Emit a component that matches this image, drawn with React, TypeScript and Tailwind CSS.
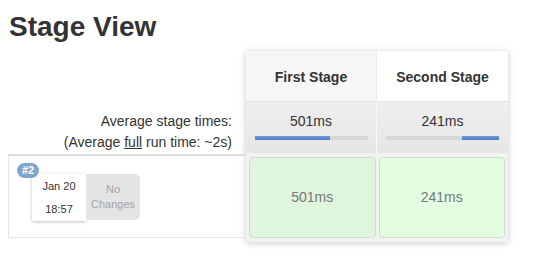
const stages = [
  { name: "First Stage", avg: "501ms", fill: 67, align: "left", took: "501ms", head: "bg-[#f6f6f6]", cell: "bg-[#def6db]" },
  { name: "Second Stage", avg: "241ms", fill: 33, align: "right", took: "241ms", head: "bg-white", cell: "bg-[#e3fde1]" },
];

export default function App() {
  return (
    <div className="min-h-screen bg-white px-[8px] text-[#333] font-['Liberation_Sans',Arial,sans-serif]">
      <h1 className="pt-[11px] pl-[1px] text-[28px] font-bold leading-[32px] text-[#333]">Stage View</h1>

      <div className="mt-[8px] flex items-start">
        {/* left: labels + build history */}
        <div className="w-[238px] shrink-0">
          <div className="h-[51px]" />
          <div className="h-[52px] pt-[9px] pr-[14px] text-right text-[14px] leading-[21px]">
            <div>Average stage times:</div>
            <div>
              (Average <span className="underline">full</span> run time: ~2s)
            </div>
          </div>
          <div className="relative h-[84px] border-t-2 border-l border-b border-t-[#dcdcdc] border-l-[#e6e6e6] border-b-[#e6e6e6]">
            <span className="absolute left-[8px] top-[7px] z-10 rounded-full bg-[#7fa6cf] px-[5px] text-[11px] font-bold leading-[15px] text-white">
              #2
            </span>
            <div className="ml-[23px] mt-[18px] flex">
              <div className="flex h-[47px] w-[54px] flex-col items-center justify-between bg-white py-[4px] text-[11px] leading-[16px] shadow-[0_1px_3px_rgba(0,0,0,0.25)]">
                <span>Jan 20</span>
                <span>18:57</span>
              </div>
              <div className="flex h-[46px] w-[54px] flex-col items-center justify-center rounded-r-[5px] bg-[#e4e4e4] text-[11px] leading-[15px] text-[#a3a3a3]">
                <span>No</span>
                <span>Changes</span>
              </div>
            </div>
          </div>
        </div>

        {/* right: stage table */}
        <div className="w-[262px] shrink-0 bg-[#f2f2f2] shadow-[0_1px_6px_rgba(0,0,0,0.22)]">
          <div className="flex h-[51px] border-b border-[#e4e4e4]">
            {stages.map((s, i) => (
              <div
                key={s.name}
                className={`flex w-[131px] items-center justify-center pt-[3px] text-[14px] font-bold ${s.head} ${i === 0 ? "border-r border-[#ececec]" : ""}`}
              >
                {s.name}
              </div>
            ))}
          </div>
          <div className="flex h-[51px]">
            {stages.map((s, i) => (
              <div
                key={s.name}
                className={`flex w-[131px] flex-col items-center bg-gradient-to-b from-[#efefef] to-[#e6e6e6] pt-[10px] ${i === 0 ? "border-r border-[#f8f8f8]" : ""}`}
              >
                <span className="text-[14px] leading-[18px]">{s.avg}</span>
                <div className={`mt-[6px] flex h-[4px] w-[113px] bg-[#d6d6d6] ${s.align === "right" ? "justify-end" : ""}`}>
                  <div className="h-full bg-gradient-to-b from-[#7398dc] to-[#4a78c8]" style={{ width: `${s.fill}%` }} />
                </div>
              </div>
            ))}
          </div>
          <div className="flex h-[89px] gap-[3px] px-[3px] pt-[4px] pb-[4px]">
            {stages.map((s) => (
              <div
                key={s.name}
                className={`flex flex-1 items-center justify-center rounded-[4px] border border-[#cddccb] text-[14px] text-[#777] ${s.cell}`}
              >
                {s.took}
              </div>
            ))}
          </div>
        </div>
      </div>
    </div>
  );
}
